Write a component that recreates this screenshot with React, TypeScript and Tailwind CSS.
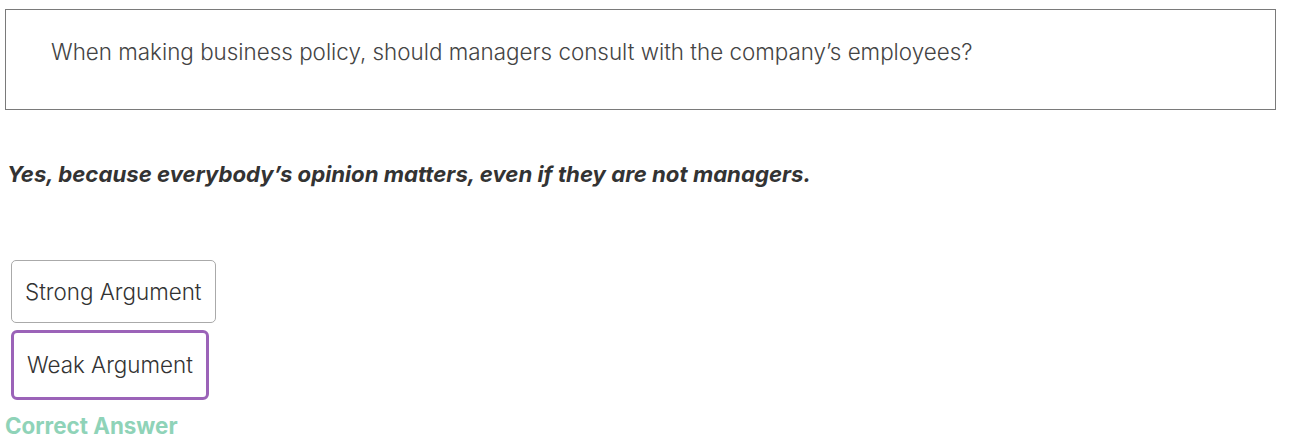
import { useState } from 'react';

const options = ['Strong Argument', 'Weak Argument'];

export default function App() {
  const [selected, setSelected] = useState('Weak Argument');

  return (
    <div className="bg-white min-h-[442px] pt-[9px] pl-[5px] text-[#444]" style={{ fontFamily: 'Inter, sans-serif' }}>
      <div className="w-[1271px] h-[101px] border border-[#7a7a7a] pl-[45px] pt-[25px]">
        <p className="text-[22.4px] font-light leading-[34px] text-[#444]">
          When making business policy, should managers consult with the company’s employees?
        </p>
      </div>

      <p className="mt-[47px] ml-[2px] text-[22.2px] font-bold italic leading-[34px] text-[#333]">
        Yes, because everybody’s opinion matters, even if they are not managers.
      </p>

      <div className="mt-[69px] ml-[6px] flex flex-col items-start gap-[7px]">
        {options.map((opt) => (
          <button
            key={opt}
            type="button"
            onClick={() => setSelected(opt)}
            className={
              selected === opt
                ? 'h-[70px] px-[13px] border-[3px] border-[#9b63b8] rounded-[6px] text-[22.4px] font-light text-[#333]'
                : 'h-[63px] px-[13px] border border-[#aaa] rounded-[5px] text-[22.4px] font-light text-[#333]'
            }
          >
            {opt}
          </button>
        ))}
      </div>

      <p className="mt-[13px] text-[22.4px] font-bold leading-[26px] text-[#8fd3b8]">Correct Answer</p>
    </div>
  );
}
